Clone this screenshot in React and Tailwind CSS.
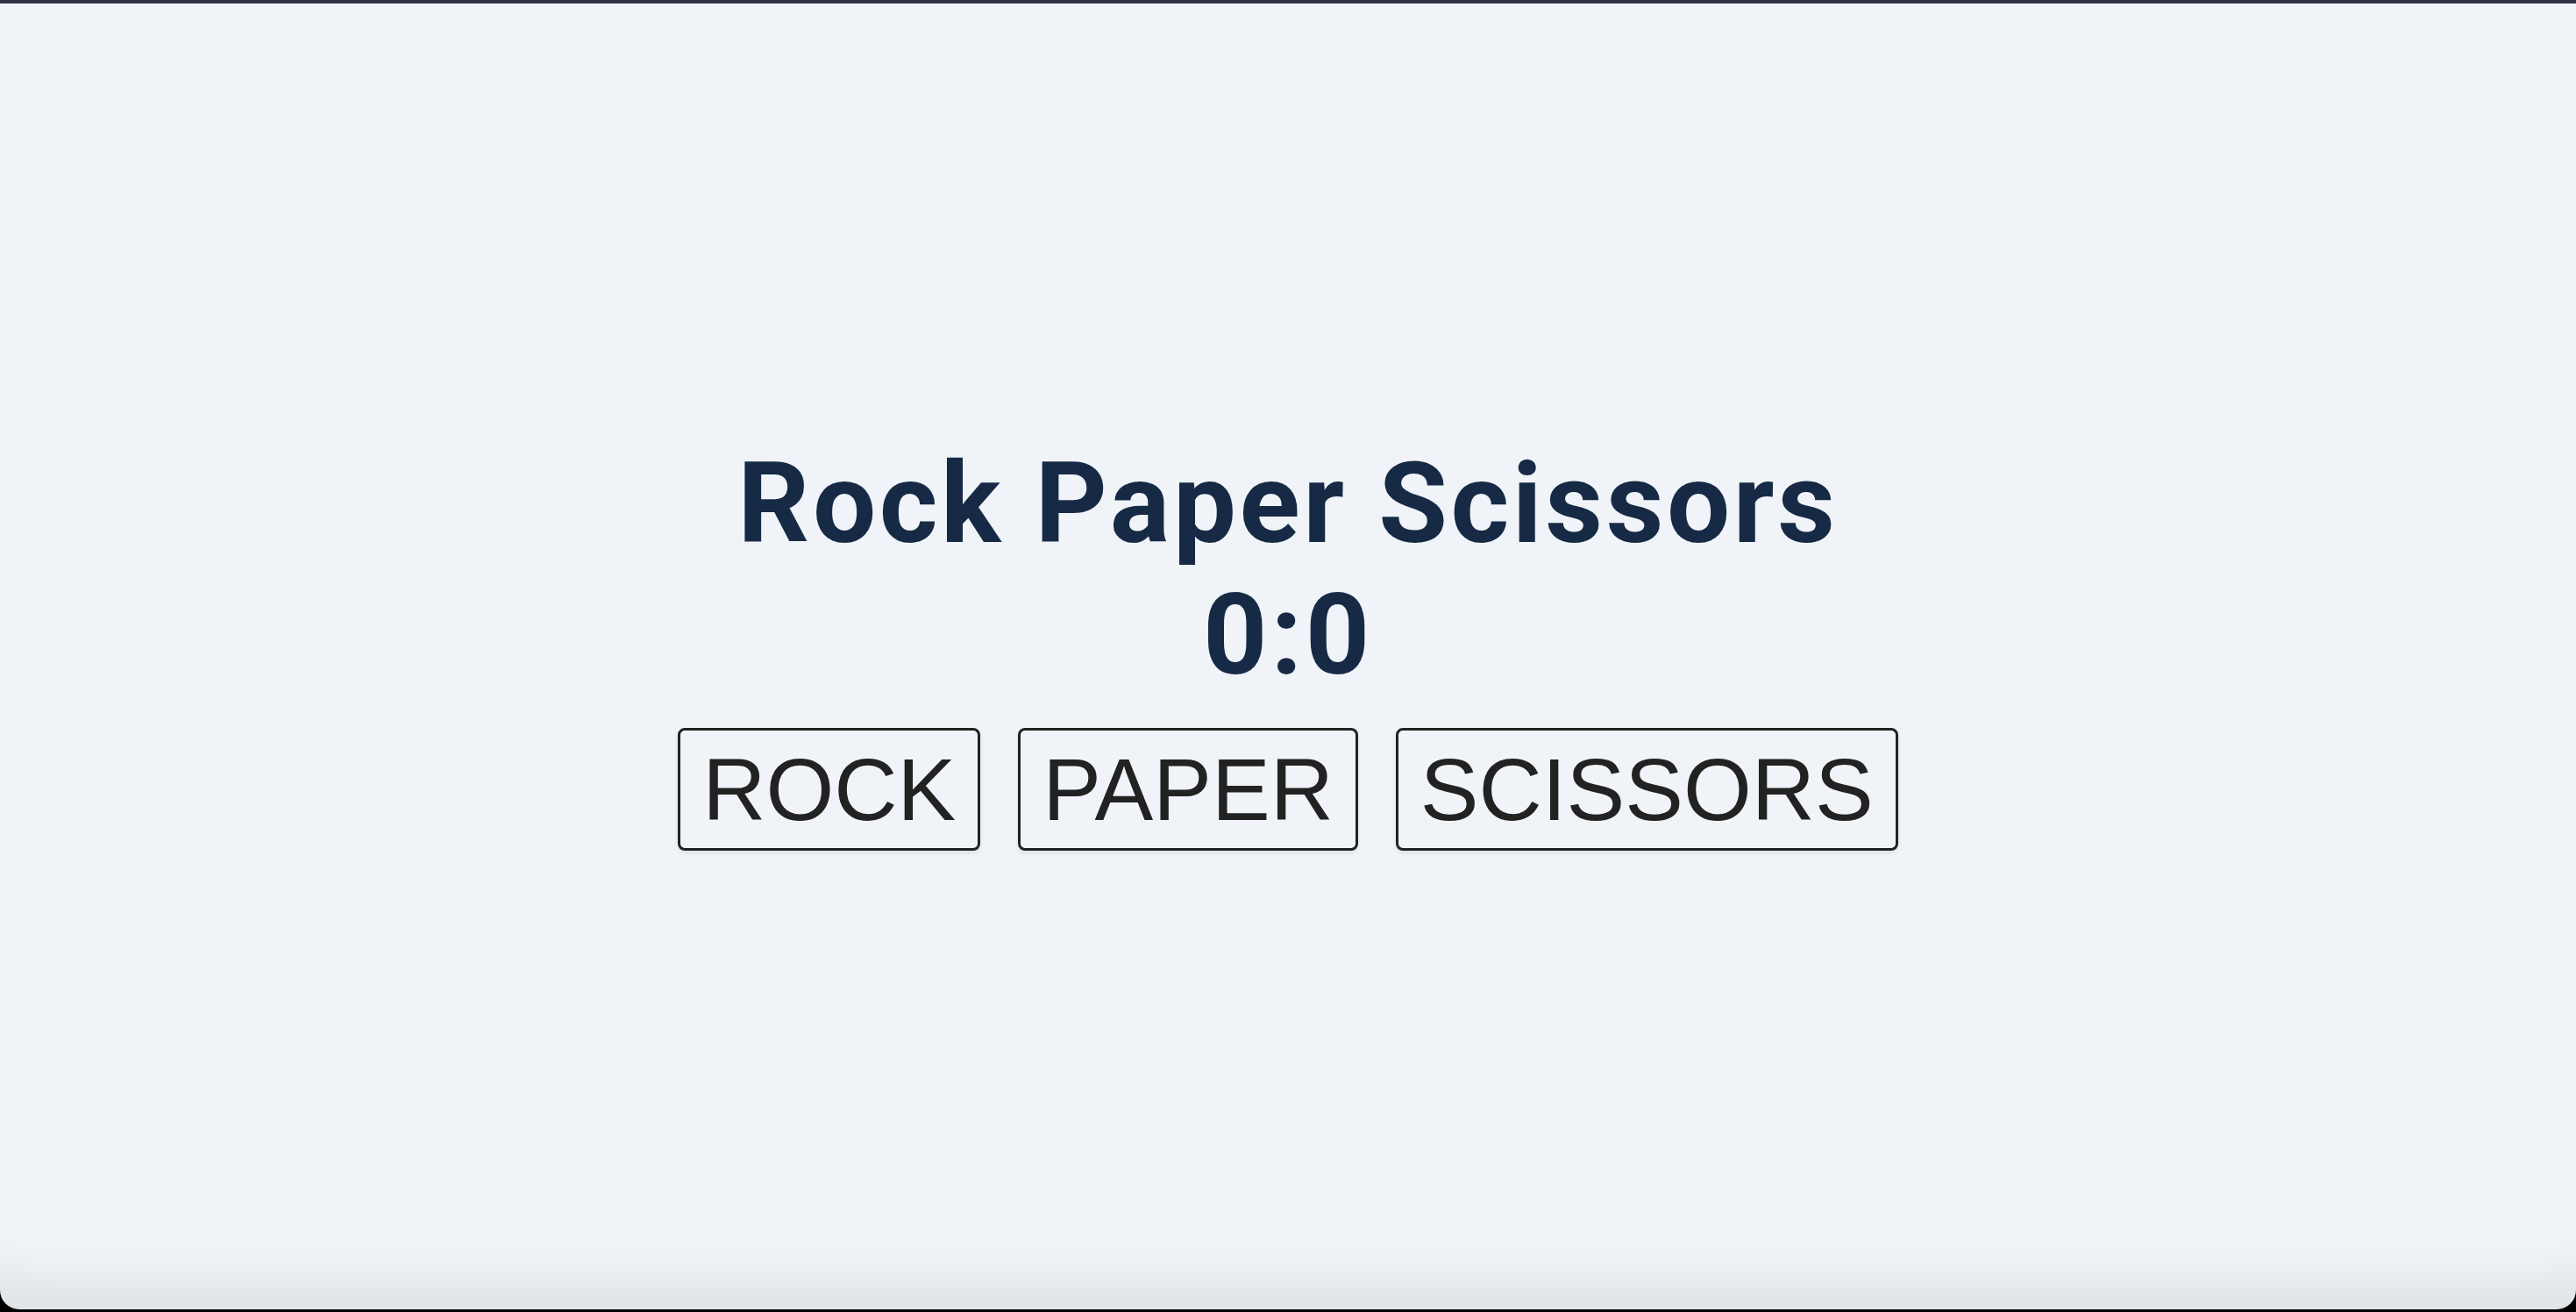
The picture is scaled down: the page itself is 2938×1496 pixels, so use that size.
import React, { useState } from 'react';

const CHOICES = ['ROCK', 'PAPER', 'SCISSORS'];

function App() {
    const [score] = useState({ player: 0, computer: 0 });

    return (
        <div className="h-screen flex flex-col bg-black">
            {/* window top edge */}
            <div className="h-[4px] bg-[#313244]" />

            <main className="flex-1 mb-[3px] rounded-b-[22px] bg-[#f0f4f8] shadow-[inset_0_-80px_60px_-50px_rgba(0,0,0,0.08)] flex flex-col items-center justify-center">
                <h1 className="text-[128px] leading-[150px] font-bold tracking-[3.6px] text-[#172a45] font-['Roboto',sans-serif]">
                    Rock Paper Scissors
                </h1>
                <h2 className="text-[128px] leading-[150px] font-bold tracking-[3.6px] text-[#172a45] font-['Roboto',sans-serif]">
                    {score.player}:{score.computer}
                </h2>

                <div className="flex gap-[43px] mt-[31px] mb-[28px]">
                    {CHOICES.map((choice) => (
                        <button
                            key={choice}
                            className="border-[3px] border-[#222] rounded-lg px-[25px] py-[9.5px] text-[100px] leading-[115px] text-[#222] font-['Liberation_Sans',Arial,sans-serif] shadow-[0_3px_5px_rgba(0,0,0,0.08)]"
                        >
                            {choice}
                        </button>
                    ))}
                </div>
            </main>
        </div>
    );
}

export default App;
